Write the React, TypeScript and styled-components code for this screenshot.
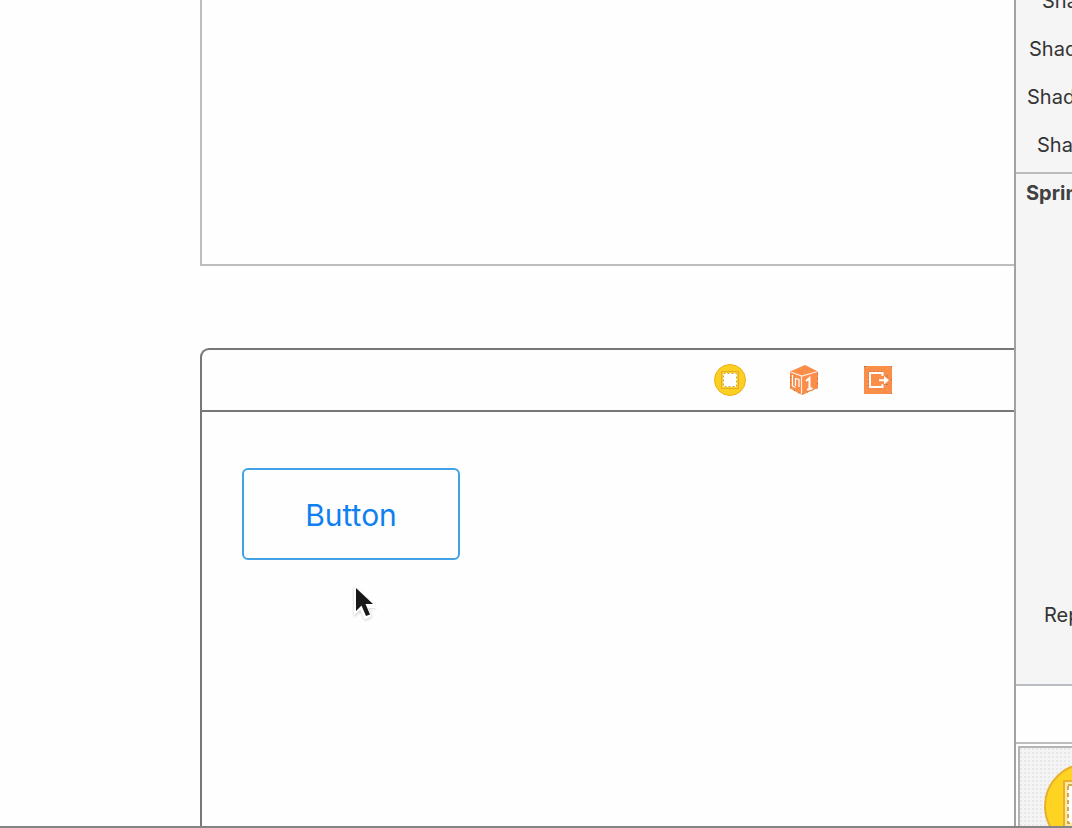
import React from "react";
import styled, { createGlobalStyle } from "styled-components";

const GlobalStyle = createGlobalStyle`
  * {
    box-sizing: border-box;
  }
  body {
    margin: 0;
    background: #fefefe;
    font-family: Inter, "Liberation Sans", sans-serif;
    color: #3a3a3a;
  }
`;

const Workspace = styled.div`
  display: flex;
  height: 100vh;
  overflow: hidden;
  position: relative;
`;

const Canvas = styled.main`
  flex: 1;
  min-width: 0;
  display: flex;
  flex-direction: column;
  gap: 82px;
  padding-left: 200px;
`;

const UpperScene = styled.section`
  height: 266px;
  flex: none;
  border-left: 2px solid #bdbdbd;
  border-bottom: 2px solid #bdbdbd;
`;

const Scene = styled.section`
  flex: 1;
  display: flex;
  flex-direction: column;
  border: 2px solid #777777;
  border-right: 0;
  border-bottom: 0;
  border-top-left-radius: 9px;
`;

const SceneDock = styled.header`
  display: flex;
  align-items: center;
  justify-content: flex-end;
  gap: 42px;
  height: 62px;
  padding-right: 120px;
  border-bottom: 2px solid #777777;
`;

const DockIcon = styled.svg`
  display: block;
  width: 32px;
  height: 32px;
`;

const SceneView = styled.div`
  position: relative;
  flex: 1;
  padding: 56px 40px;
`;

const OutlineButton = styled.button`
  display: block;
  width: 218px;
  height: 92px;
  padding: 2px 0 0;
  border: 2px solid #43a2e6;
  border-radius: 6px;
  background: transparent;
  color: #0f80f2;
  font-family: inherit;
  font-size: 30px;
  line-height: 36px;
`;

const Pointer = styled.svg`
  position: absolute;
  left: 148px;
  top: 170px;
  width: 32px;
  height: 44px;
`;

const Inspector = styled.aside`
  flex: none;
  width: 58px;
  display: flex;
  flex-direction: column;
  border-left: 2px solid #a6a19e;
  background: #f5f5f5;
  overflow: hidden;
`;

const ShadowGroup = styled.div`
  height: 174px;
  flex: none;
  display: flex;
  flex-direction: column;
  justify-content: flex-end;
  padding-bottom: 3px;
  border-bottom: 2px solid #bcbcbc;
`;

const SpringGroup = styled.div`
  height: 512px;
  flex: none;
  display: flex;
  flex-direction: column;
  justify-content: space-between;
  padding: 1px 0 45px;
  border-bottom: 2px solid #b9bcc2;
`;

const Label = styled.div<{ $indent: number; $bold?: boolean }>`
  flex: none;
  height: 48px;
  padding-left: ${(p) => p.$indent}px;
  font-size: 20px;
  line-height: 48px;
  font-weight: ${(p) => (p.$bold ? 700 : 400)};
  color: ${(p) => (p.$bold ? "#404040" : "#343434")};
  white-space: nowrap;
`;

const GroupTitle = styled(Label)`
  height: 36px;
  line-height: 36px;
`;

const LibraryTabs = styled.div`
  height: 58px;
  flex: none;
  background: #fefefe;
  border-bottom: 2px solid #bcbcbc;
`;

const Library = styled.div`
  flex: 1;
  display: flex;
  padding: 2px 0 0 2px;
  background: #fefefe;
`;

const LibraryCell = styled.div`
  flex: 1;
  border-left: 2px solid #b5b5b8;
  border-top: 2px solid #b5b5b8;
  padding: 12px 0 0 24px;
  background:
    repeating-linear-gradient(0deg, transparent 0 2px, #f4f4f4 2px 4px),
    repeating-linear-gradient(90deg, #e8e8e8 0 2px, #f4f4f4 2px 4px);
  overflow: hidden;
`;

const LibraryIcon = styled.svg`
  display: block;
  width: 86px;
  height: 86px;
`;

const BottomRule = styled.div`
  position: absolute;
  left: 0;
  right: 0;
  bottom: 0;
  height: 2px;
  background: #858585;
`;

const shadowLabels = [
  { text: "Sha", indent: 26 },
  { text: "Shad", indent: 13 },
  { text: "Shad", indent: 11 },
  { text: "Sha", indent: 21 },
];

const ControllerIcon = () => (
  <DockIcon viewBox="0 0 32 32" aria-label="View Controller">
    <circle cx="16" cy="16" r="15.5" fill="#fdcf20" stroke="#eab021" />
    <rect x="7.5" y="7.500" width="17" height="17" fill="#fdcf20" stroke="#e5ad2c" />
    <rect x="9" y="9" width="14" height="14" fill="#fefefe" />
    <rect x="9.5" y="9.5" width="13" height="13" fill="none" stroke="#c9a548" strokeDasharray="2 2" />
  </DockIcon>
);

const ResponderIcon = () => (
  <DockIcon viewBox="0 0 32 32" aria-label="First Responder">
    <path d="M2 7.500 17 1l13 6.500V24L14 31 2 24.500Z" fill="#fb8c49" />
    <path d="M2.500 8V24L13.500 30.500 29.500 24V8" fill="none" stroke="#96724e" strokeDasharray="1 4" />
    <path d="M2.500 8 14 12 29.500 7.500M13.500 12V30.500" fill="none" stroke="#fdeee2" strokeWidth="1.200" />
    <path d="M4.500 11v11l3 1.500M7.500 22V14.500l3.500 1V23" fill="none" stroke="#fff" strokeWidth="1.200" />
    <path d="m18 17 3.500-3v11M19 25.800l5.500-1.600" fill="none" stroke="#fff" strokeWidth="2" />
    <path d="M7 7h1M12 5h1M17 4h1M21 7h1M16 9h1M26 13h1M26 19h1M16 22h1M26 24h1M4 24h1M10 26h1" stroke="#e0b72c" />
  </DockIcon>
);

const ExitIcon = () => (
  <DockIcon viewBox="0 0 32 32" aria-label="Exit">
    <path d="M2 2h28v28H2z" fill="#fb8c49" />
    <path d="M20.500 12V9H8v14h12.500v-3" fill="none" stroke="#fff" strokeWidth="2" />
    <path d="M17 15.200h5V12l5 4.200-5 4.200v-3.200h-5z" fill="#fff" />
    <path d="M7.500 7.500h14M6.500 9v14M22 20v4" fill="none" stroke="#a57b58" strokeDasharray="1 3" />
    <path d="M24.500 12h1.500M24 20.500h1.500M29 16h1M2 2.500h2M29 2.500h1M29 29.500h1" stroke="#94765b" />
    <path d="M5 4h1M11 4h1M18 4h1M25 5h1M12 13h1M16 12h1M12 19h1M16 21h1M5 26h1M12 27h1M19 27h1M25 25h1M4 15h1M26 9h1" stroke="#e0b72c" />
  </DockIcon>
);

export default function App() {
  return (
    <>
      <GlobalStyle />
      <Workspace>
        <Canvas>
          <UpperScene />
          <Scene>
            <SceneDock>
              <ControllerIcon />
              <ResponderIcon />
              <ExitIcon />
            </SceneDock>
            <SceneView>
              <OutlineButton type="button">Button</OutlineButton>
              <Pointer viewBox="0 0 32 44" aria-hidden="true">
                <path
                  d="M4 4v31l6.500-6 4.500 9.500 7-3-4-9h8.500Z"
                  fill="#000"
                  opacity="0.2"
                  style={{ filter: "blur(1.5px)" }}
                />
                <path d="M4 1v32l6.500-5 4 9.500 7-3-3.500-8.500h9.500Z" fill="#fefefe" />
                <path d="M6 6v23l5.500-5.500 4.500 10.500 4-1.500-4.500-10.500h7.500Z" fill="#171717" />
              </Pointer>
            </SceneView>
          </Scene>
        </Canvas>
        <Inspector>
          <ShadowGroup>
            {shadowLabels.map((label, i) => (
              <Label key={i} $indent={label.indent}>
                {label.text}
              </Label>
            ))}
          </ShadowGroup>
          <SpringGroup>
            <GroupTitle $indent={10} $bold>
              Sprin
            </GroupTitle>
            <Label $indent={28}>Rep</Label>
          </SpringGroup>
          <LibraryTabs />
          <Library>
            <LibraryCell>
              <LibraryIcon viewBox="0 0 86 86" aria-hidden="true">
                <circle cx="43" cy="46" r="42" fill="#fed322" stroke="#e8b02c" strokeWidth="2" />
                <rect x="20" y="21" width="46" height="46" fill="#fce9a4" stroke="#e8b02c" strokeWidth="2" />
                <rect x="24" y="25" width="38" height="38" fill="#fefefe" stroke="#d5a94a" strokeWidth="2" strokeDasharray="4 3" />
              </LibraryIcon>
            </LibraryCell>
          </Library>
        </Inspector>
        <BottomRule />
      </Workspace>
    </>
  );
}
